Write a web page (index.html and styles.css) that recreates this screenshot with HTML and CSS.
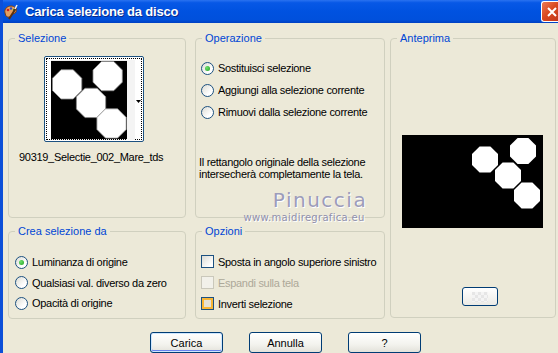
FILE: index.html
```html
<!DOCTYPE html>
<html lang="it">
<head>
    <meta charset="UTF-8">
    <title>Carica selezione da disco</title>
    <link rel="stylesheet" href="styles.css">
</head>
<body>
    <div class="window">
        <div class="titlebar">
            <svg class="app-icon" width="16" height="16" viewBox="0 0 16 16">
                <path d="M2 9 C1 5 4 2 8 2 C12 2 14 5 13 8 C12 10 10 9 9 11 C8 13 5 14 3 12 Z" fill="#e8a060" stroke="#7a4018" stroke-width="1"/>
                <circle cx="5" cy="6" r="1.3" fill="#d02020"/>
                <circle cx="8" cy="4.5" r="1.2" fill="#2050d0"/>
                <circle cx="11" cy="6" r="1.2" fill="#20a030"/>
                <path d="M6 15 L13 4" stroke="#5a3010" stroke-width="2"/>
                <path d="M12 5 L14 1" stroke="#f0f0f0" stroke-width="1.5"/>
            </svg>
            <span class="title">Carica selezione da disco</span>
            <div class="close-btn">
                <svg width="12" height="12" viewBox="0 0 12 12">
                    <path d="M2 2 L10 10 M10 2 L2 10" stroke="#fff" stroke-width="2"/>
                </svg>
            </div>
        </div>

        <div class="client">
            <div class="groups">
                <div class="group g-selezione">
                    <span class="group-title">Selezione</span>
                    <div class="thumb">
                        <div class="thumb-inner">
                            <svg class="thumb-img" width="78" height="80" viewBox="0 0 78 80">
                                <rect width="78" height="80" fill="#000"/>
                                <polygon points="10.3,9 22.7,9 31.5,17.8 31.5,30.2 22.7,39 10.3,39 1.5,30.2 1.5,17.8" fill="#fff" stroke="#8a8a8a" stroke-width="0.8"/>
                                <polygon points="51.8,0.5 64.2,0.5 73,9.3 73,21.7 64.2,30.5 51.8,30.5 43,21.7 43,9.3" fill="#fff" stroke="#8a8a8a" stroke-width="0.8"/>
                                <polygon points="34.8,28 47.2,28 56,36.8 56,49.2 47.2,58 34.8,58 26,49.2 26,36.8" fill="#fff" stroke="#8a8a8a" stroke-width="0.8"/>
                                <polygon points="55.8,49 68.2,49 77,57.8 77,70.2 68.2,79 55.8,79 47,70.2 47,57.8" fill="#fff" stroke="#8a8a8a" stroke-width="0.8"/>
                            </svg>
                            <div class="thumb-strip"></div>
                            <div class="thumb-arrow">
                                <svg width="5" height="3" viewBox="0 0 5 3"><path d="M0 0 H5 L2.5 3 Z" fill="#000"/></svg>
                            </div>
                        </div>
                    </div>
                    <div class="filename">90319_Selectie_002_Mare_tds</div>
                </div>

                <div class="group g-operazione">
                    <span class="group-title">Operazione</span>
                    <div class="option-list op-list">
                        <div class="option"><span class="radio checked"></span>Sostituisci selezione</div>
                        <div class="option"><span class="radio"></span>Aggiungi alla selezione corrente</div>
                        <div class="option"><span class="radio"></span>Rimuovi dalla selezione corrente</div>
                    </div>
                    <p class="info">Il rettangolo originale della selezione<br>intersecherà completamente la tela.</p>
                </div>

                <div class="group g-anteprima">
                    <span class="group-title">Anteprima</span>
                    <svg class="preview" width="141" height="93" viewBox="0 0 141 93">
                        <rect width="141" height="93" fill="#000"/>
                        <polygon points="77.6,11.5 88.4,11.5 96,19.1 96,29.9 88.4,37.5 77.6,37.5 70,29.9 70,19.1" fill="#fff"/>
                        <polygon points="115.6,3 126.4,3 134,10.6 134,21.4 126.4,29 115.6,29 108,21.4 108,10.6" fill="#fff"/>
                        <polygon points="100.6,27.5 111.4,27.5 119,35.1 119,45.9 111.4,53.5 100.6,53.5 93,45.9 93,35.1" fill="#fff"/>
                        <polygon points="119.6,47.5 130.4,47.5 138,55.1 138,65.9 130.4,73.5 119.6,73.5 112,65.9 112,55.1" fill="#fff"/>
                    </svg>
                    <div class="preview-btn"><span class="checker"></span></div>
                </div>

                <div class="group g-crea">
                    <span class="group-title">Crea selezione da</span>
                    <div class="option-list crea-list">
                        <div class="option"><span class="radio checked"></span>Luminanza di origine</div>
                        <div class="option"><span class="radio"></span>Qualsiasi val. diverso da zero</div>
                        <div class="option"><span class="radio"></span>Opacità di origine</div>
                    </div>
                </div>

                <div class="group g-opzioni">
                    <span class="group-title">Opzioni</span>
                    <div class="option-list opz-list">
                        <div class="option"><span class="check"></span>Sposta in angolo superiore sinistro</div>
                        <div class="option disabled"><span class="check"></span>Espandi sulla tela</div>
                        <div class="option"><span class="check hot"></span>Inverti selezione</div>
                    </div>
                </div>
            </div>

            <div class="buttons">
                <button class="btn default">Carica</button>
                <button class="btn">Annulla</button>
                <button class="btn">?</button>
            </div>

            <div class="watermark">
                <span class="wm-name">Pinuccia</span>
                <span class="wm-url">www.maidiregrafica.eu</span>
            </div>
        </div>
    </div>
</body>
</html>
```

FILE: styles.css
```css
body {
    margin: 0;
    width: 558px;
    height: 353px;
    overflow: hidden;
    background: #ece9d8;
    font-family: 'Liberation Sans', Arial, sans-serif;
    font-size: 11px;
    color: #000;
}

.window {
    width: 558px;
    height: 353px;
    border-left: 3px solid #0c4fd8;
    box-sizing: border-box;
    display: flex;
    flex-direction: column;
    overflow: hidden;
}

/* title bar */
.titlebar {
    height: 23px;
    flex-shrink: 0;
    display: flex;
    align-items: center;
    background: linear-gradient(#2a72f0, #0758e6 12%, #0052e0 50%, #0050dc 85%, #0040c2);
    position: relative;
}

.app-icon {
    margin-right: 6px;
}

.title {
    color: #fff;
    font-weight: bold;
    font-size: 13px;
    letter-spacing: -0.2px;
    text-shadow: 1px 1px 0 #0a2a8a;
}

.close-btn {
    position: absolute;
    right: 0;
    top: 1px;
    width: 16px;
    height: 19px;
    border: 1px solid #fff;
    border-right: none;
    border-radius: 3px 0 0 3px;
    background: linear-gradient(135deg, #ea7a55, #d9471f 50%, #c2361a);
    display: flex;
    align-items: center;
    justify-content: flex-end;
    overflow: hidden;
}

/* client area */
.client {
    flex: 1;
    position: relative;
    padding: 15px 0 0 5px;
}

.groups {
    display: grid;
    grid-template-columns: 178px 9px 190px 5px 166px;
    grid-template-rows: 180px 13px 88px;
}

.group {
    position: relative;
    border: 1px solid #d0d0bf;
    border-radius: 4px;
    box-sizing: border-box;
}

.group-title {
    position: absolute;
    top: -7px;
    left: 6px;
    padding: 0 3px;
    background: #ece9d8;
    color: #0046d5;
    line-height: 13px;
}

.g-selezione { grid-column: 1; grid-row: 1; }
.g-operazione { grid-column: 3; grid-row: 1; }
.g-anteprima { grid-column: 5; grid-row: 1 / 4; height: 280px; }
.g-crea { grid-column: 1; grid-row: 3; }
.g-opzioni { grid-column: 3; grid-row: 3; }

/* selection thumbnail */
.thumb {
    margin: 17px 0 0 35px;
    width: 100px;
    height: 86px;
    border: 1px solid #1c5180;
    border-radius: 2px;
    box-sizing: border-box;
    background: #fff;
    padding: 1px;
}

.thumb-inner {
    height: 100%;
    border: 1px dotted #000;
    box-sizing: border-box;
    display: flex;
    padding: 1px 0 0 4px;
}

.thumb-img {
    display: block;
}

.thumb-strip {
    width: 8px;
    height: 80px;
    background: #f4f4f4;
}

.thumb-arrow {
    width: 5px;
    padding-top: 40px;
    margin-left: 1px;
}

.thumb-arrow svg {
    display: block;
}

.filename {
    margin: 9px 0 0 10px;
    white-space: nowrap;
    letter-spacing: -0.3px;
    line-height: 13px;
}

/* radios and checkboxes */
.option-list {
    display: flex;
    flex-direction: column;
}

.option {
    display: flex;
    align-items: center;
    white-space: nowrap;
    letter-spacing: -0.3px;
}

.op-list { margin: 18px 0 0 5px; }
.op-list .option { height: 22px; }

.crea-list { margin: 20px 0 0 6px; }
.crea-list .option { height: 20.5px; }

.opz-list { margin: 19px 0 0 5px; }
.opz-list .option { height: 21px; }

.radio {
    width: 13px;
    height: 13px;
    border: 1px solid #1c5180;
    border-radius: 50%;
    box-sizing: border-box;
    background: linear-gradient(135deg, #dcdcd4, #fff 70%);
    margin-right: 4px;
    display: flex;
    align-items: center;
    justify-content: center;
    flex-shrink: 0;
}

.radio.checked::after {
    content: "";
    width: 5px;
    height: 5px;
    border-radius: 50%;
    background: radial-gradient(circle at 35% 35%, #6ee06e, #21a121);
}

.check {
    width: 13px;
    height: 13px;
    border: 1px solid #1c5180;
    box-sizing: border-box;
    background: linear-gradient(135deg, #dcdcd4, #fff 80%);
    margin-right: 4px;
    flex-shrink: 0;
}

.check.hot {
    box-shadow: inset 0 0 0 2px #f8b636;
    background: #e4e1d6;
}

.option.disabled {
    color: #aca899;
}

.option.disabled .check {
    border-color: #cac8bb;
    background: #f2f1ea;
}

.info {
    margin: 33px 0 0 3px;
    line-height: 12px;
    letter-spacing: -0.3px;
}

/* preview */
.preview {
    display: block;
    margin: 96px 0 0 11px;
}

.preview-btn {
    margin: 59px 0 0 71px;
    width: 36px;
    height: 19px;
    border: 1px solid #003c74;
    border-radius: 3px;
    box-sizing: border-box;
    background: linear-gradient(#fff, #ecebe6);
    display: flex;
    align-items: center;
    justify-content: center;
}

.checker {
    width: 16px;
    height: 10px;
    background: repeating-conic-gradient(#f4f4f4 0 25%, #e6e6e6 0 50%) 0 0 / 6px 6px;
}

/* dialog buttons */
.buttons {
    display: flex;
    gap: 26px;
    margin: 13px 0 0 142px;
}

.btn {
    width: 73px;
    height: 21px;
    border: 1px solid #003c74;
    border-radius: 3px;
    background: linear-gradient(#fff, #f3f3ee 60%, #e3e2da);
    font-family: 'Liberation Sans', Arial, sans-serif;
    font-size: 11px;
    padding: 0;
    color: #000;
}

.btn.default {
    box-shadow: inset 0 0 0 1px #cee7ff, inset 0 -1px 0 1px #6982ee;
}

/* watermark */
.watermark {
    position: absolute;
    left: 237px;
    top: 167px;
    width: 128px;
    display: flex;
    flex-direction: column;
    align-items: center;
    gap: 2px;
    pointer-events: none;
}

.wm-name {
    font-family: 'DejaVu Sans', sans-serif;
    font-size: 20px;
    letter-spacing: 1.5px;
    color: #9c9cba;
    text-shadow: 1px 1px 0 #fff;
    line-height: 20px;
    margin-left: 32px;
}

.wm-url {
    font-family: 'DejaVu Sans', sans-serif;
    font-size: 10px;
    letter-spacing: 0.3px;
    color: #9090ac;
    text-shadow: 1px 1px 0 #fff;
    line-height: 11px;
}
```
